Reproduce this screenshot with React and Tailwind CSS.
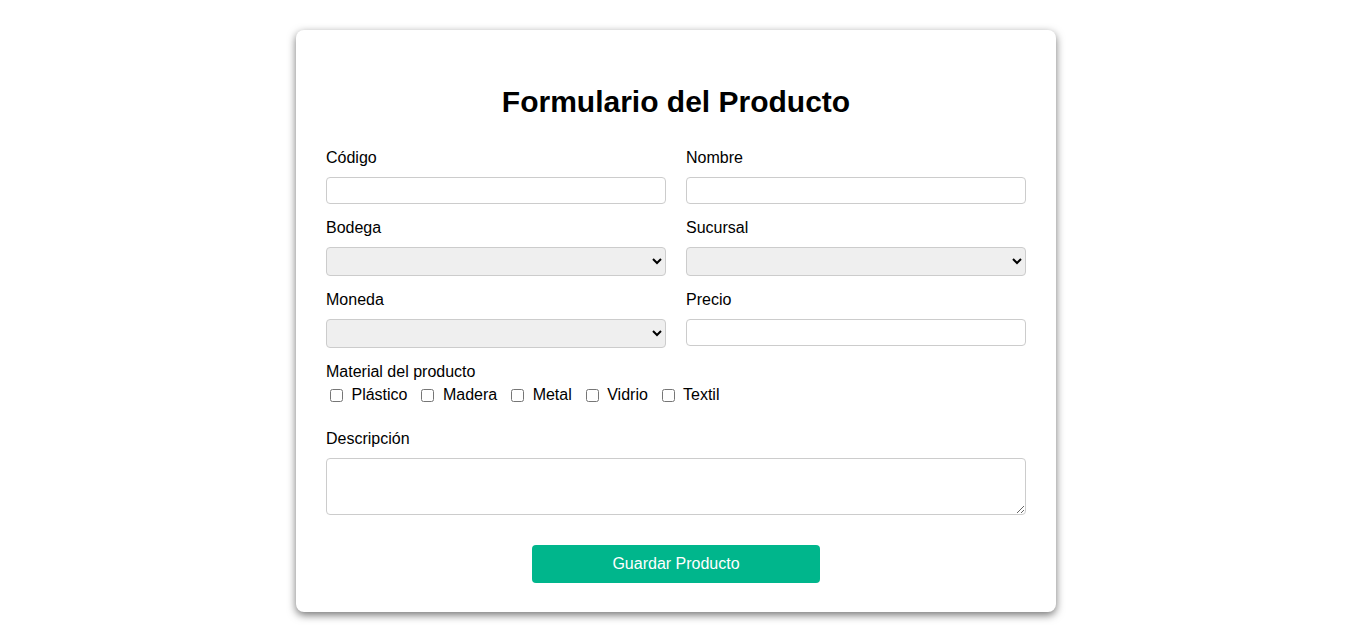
import React, { useState } from "react";

const inputCls =
  "block w-full h-[27px] px-[5px] border border-[#cccccc] rounded-[4px] bg-white text-base outline-none";
const selectCls =
  "block w-full h-[29px] px-[3px] border border-[#cccccc] rounded-[4px] bg-[#efefef] text-base";
const labelCls = "block text-base leading-[18px] pt-[1px] mb-[10px]";

function Field({ label, children }) {
  return (
    <div className="mb-[14px]">
      <label className={labelCls}>{label}</label>
      {children}
    </div>
  );
}

export default function App() {
  const [materials, setMaterials] = useState([]);
  const options = ["Plástico", "Madera", "Metal", "Vidrio", "Textil"];

  const toggle = (m) => {
    setMaterials((prev) => (prev.includes(m) ? prev.filter((x) => x !== m) : [...prev, m]));
  };

  return (
    <div
      className="min-h-screen bg-white text-black pt-[30px] pb-[30px] flex justify-center pr-[4px]"
      style={{ fontFamily: '"Liberation Sans", Arial, sans-serif' }}
    >
      <form
        className="w-[760px] bg-white rounded-[8px] shadow-[0_3px_8px_rgba(0,0,0,0.55)] px-[30px] pt-[30px] pb-[29px]"
        onSubmit={(e) => e.preventDefault()}
      >
        <h2 className="text-[30px] font-bold leading-[32px] text-center mt-[26px] mb-[30px]">
          Formulario del Producto
        </h2>

        <div className="grid grid-cols-2 gap-x-[20px]">
          <Field label="Código">
            <input type="text" className={inputCls} />
          </Field>
          <Field label="Nombre">
            <input type="text" className={inputCls} />
          </Field>
          <Field label="Bodega">
            <select className={selectCls}>
              <option value=""></option>
            </select>
          </Field>
          <Field label="Sucursal">
            <select className={selectCls}>
              <option value=""></option>
            </select>
          </Field>
          <Field label="Moneda">
            <select className={selectCls}>
              <option value=""></option>
            </select>
          </Field>
          <Field label="Precio">
            <input type="text" className={inputCls} />
          </Field>
        </div>

        <div className="mb-[24px]">
          <label className="block text-base leading-[18px] pt-[1px]">Material del producto</label>
          <div className="text-base leading-[18px] mt-[5px]">
            {options.map((m) => (
              <label key={m} className="inline-block mr-[10px]">
                <input
                  type="checkbox"
                  className="m-[3px_4px_3px_4px] w-[13px] h-[13px] align-[-2px]"
                  checked={materials.includes(m)}
                  onChange={() => toggle(m)}
                />{" "}
                {m}
              </label>
            ))}
          </div>
        </div>

        <div>
          <label className={labelCls}>Descripción</label>
          <textarea className="block w-full h-[57px] px-[5px] border border-[#cccccc] rounded-[4px] text-base"></textarea>
        </div>

        <div className="flex justify-center mt-[30px]">
          <button
            type="submit"
            className="w-[288px] h-[38px] bg-[#00b68c] text-white text-base rounded-[4px]"
          >
            Guardar Producto
          </button>
        </div>
      </form>
    </div>
  );
}
